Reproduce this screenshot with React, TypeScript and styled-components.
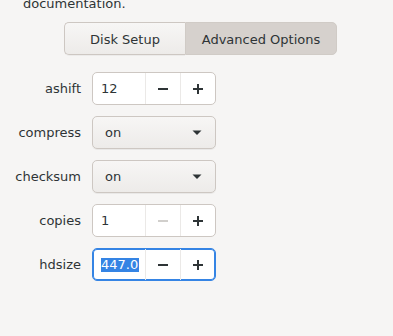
import React from "react";
import styled, { createGlobalStyle } from "styled-components";

const GlobalStyle = createGlobalStyle`
  html, body {
    margin: 0;
    padding: 0;
    background: #f6f5f4;
    overflow: hidden;
  }
  body {
    font-family: "DejaVu Sans", "Liberation Sans", sans-serif;
    font-size: 13px;
    color: #2e3436;
  }
`;

const Page = styled.div`
  width: 393px;
  height: 336px;
  display: flex;
  flex-direction: column;
`;

const Intro = styled.p`
  margin: -5px 0 0 23px;
  line-height: 17px;
  color: #2e3436;
`;

const TabBar = styled.div`
  display: flex;
  margin: 10px 0 0 64px;
  width: 273px;
  height: 33px;
`;

const Tab = styled.button<{ $active?: boolean; $first?: boolean }>`
  flex: ${(p) => (p.$first ? "0 0 121px" : "1")};
  font: inherit;
  color: #2e3436;
  border: 1px solid ${(p) => (p.$active ? "#d0cbc6" : "#cdc7c2")};
  border-right: ${(p) => (p.$first ? "none" : undefined)};
  border-radius: ${(p) => (p.$first ? "5px 0 0 5px" : "0 5px 5px 0")};
  background: ${(p) =>
    p.$active ? "#d6d1cd" : "linear-gradient(to bottom, #f7f6f5, #edebe9)"};
  box-shadow: ${(p) => (p.$active ? "none" : "0 1px 0 rgba(0,0,0,0.04)")};
  padding: 0;
  padding-top: 1px;
`;

const Form = styled.div`
  display: grid;
  grid-template-columns: 81px 124px;
  column-gap: 11px;
  row-gap: 11px;
  grid-auto-rows: 33px;
  margin-top: 17px;
`;

const Label = styled.div`
  display: flex;
  align-items: center;
  justify-content: flex-end;
  color: #2e3436;
`;

const Spin = styled.div<{ $focused?: boolean }>`
  display: flex;
  background: #ffffff;
  border: 1px solid ${(p) => (p.$focused ? "#3584e4" : "#cdc7c2")};
  box-shadow: ${(p) => (p.$focused ? "inset 0 0 0 1px #3584e4" : "none")};
  border-radius: 5px;
  overflow: hidden;
`;

const SpinEntry = styled.div`
  width: 52px;
  display: flex;
  align-items: center;
  padding-left: 8px;
  box-sizing: border-box;
`;

const Selected = styled.span`
  background: #3584e4;
  color: #ffffff;
  line-height: 14px;
  padding: 0 1px 0 0;
`;

const SpinBtn = styled.div<{ $disabled?: boolean }>`
  flex: 1;
  display: flex;
  align-items: center;
  justify-content: center;
  border-left: 1px solid #ebe9e7;
  color: ${(p) => (p.$disabled ? "#d1cfcc" : "#2e3436")};
`;

const Combo = styled.div`
  display: flex;
  align-items: center;
  justify-content: space-between;
  padding: 0 13px 0 12px;
  border: 1px solid #cdc7c2;
  border-radius: 5px;
  background: linear-gradient(to bottom, #f7f6f5, #edebe9);
  box-shadow: 0 1px 0 rgba(0, 0, 0, 0.05);
`;

const Arrow = () => (
  <svg width="10" height="6" viewBox="0 0 10 6">
    <path d="M0.5 0.5 L9.5 0.5 L5 5 Z" fill="#2e3436" />
  </svg>
);

const Minus = () => (
  <svg width="12" height="12" viewBox="0 0 12 12">
    <rect x="1" y="5" width="10" height="2" fill="currentColor" />
  </svg>
);

const Plus = () => (
  <svg width="12" height="12" viewBox="0 0 12 12">
    <rect x="1" y="5" width="10" height="2" fill="currentColor" />
    <rect x="5" y="1" width="2" height="10" fill="currentColor" />
  </svg>
);

const SpinField = ({
  value,
  focused,
  minDisabled,
}: {
  value: string;
  focused?: boolean;
  minDisabled?: boolean;
}) => (
  <Spin $focused={focused}>
    <SpinEntry>{focused ? <Selected>{value}</Selected> : value}</SpinEntry>
    <SpinBtn $disabled={minDisabled}>
      <Minus />
    </SpinBtn>
    <SpinBtn>
      <Plus />
    </SpinBtn>
  </Spin>
);

const ComboField = ({ value }: { value: string }) => (
  <Combo>
    <span>{value}</span>
    <Arrow />
  </Combo>
);

export default function App() {
  return (
    <Page>
      <GlobalStyle />
      <Intro>documentation.</Intro>
      <TabBar>
        <Tab $first>Disk Setup</Tab>
        <Tab $active>Advanced Options</Tab>
      </TabBar>
      <Form>
        <Label>ashift</Label>
        <SpinField value="12" />
        <Label>compress</Label>
        <ComboField value="on" />
        <Label>checksum</Label>
        <ComboField value="on" />
        <Label>copies</Label>
        <SpinField value="1" minDisabled />
        <Label>hdsize</Label>
        <SpinField value="447.0" focused />
      </Form>
    </Page>
  );
}
